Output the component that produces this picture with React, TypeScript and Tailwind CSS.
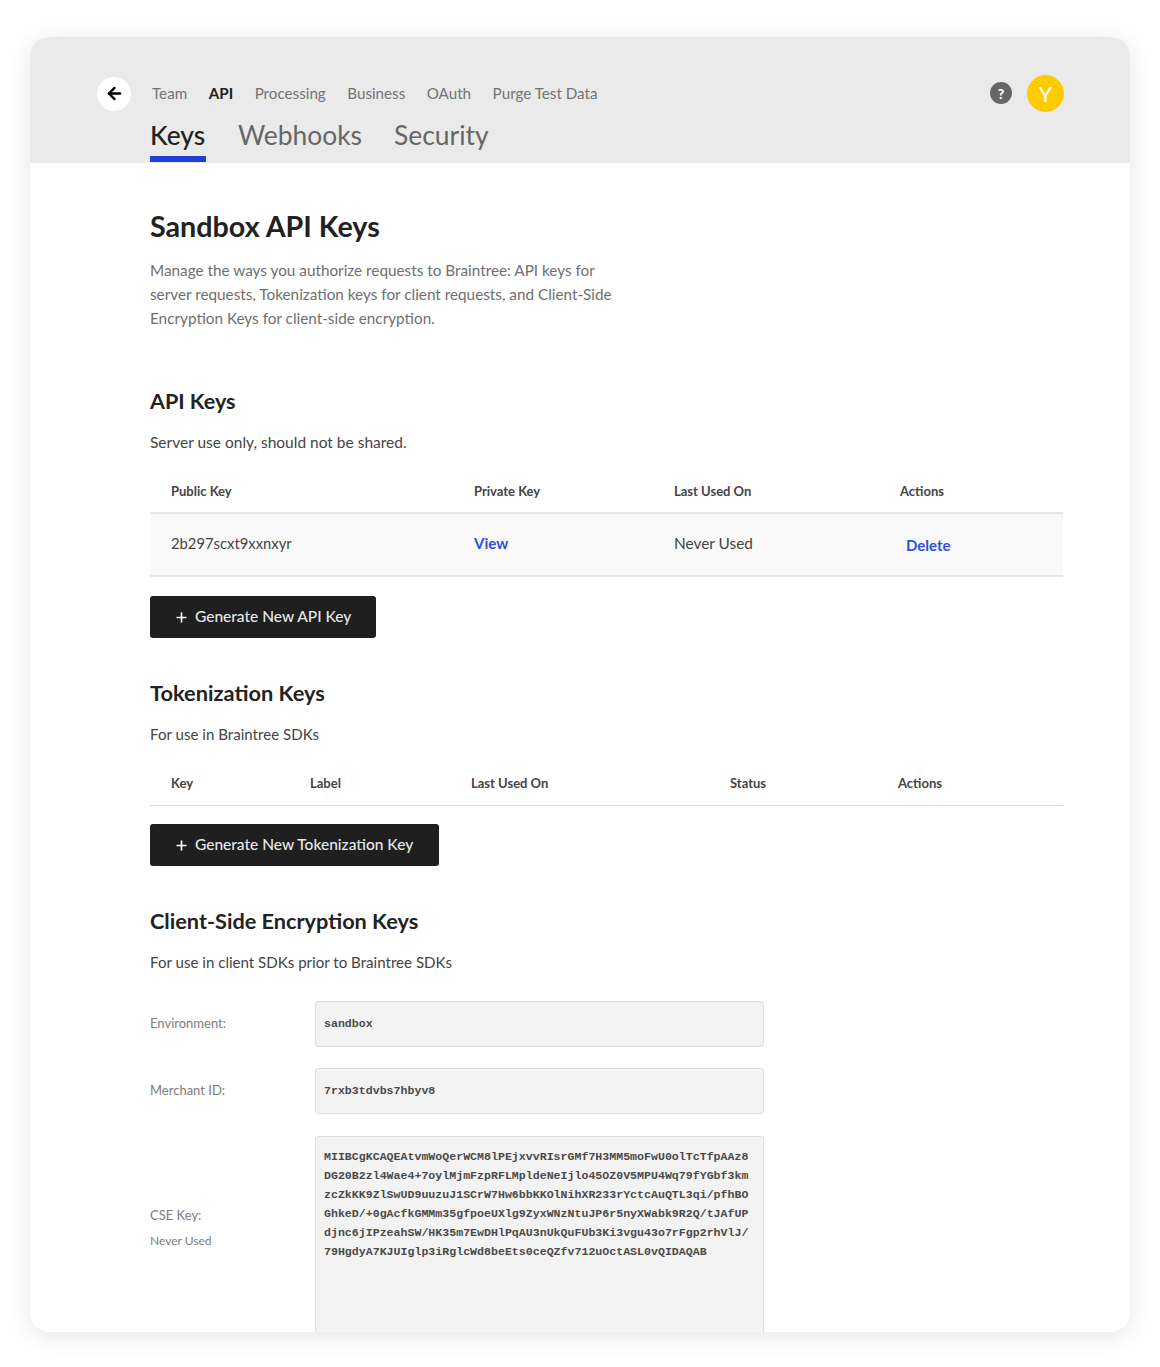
import { ArrowLeft, Plus } from 'lucide-react';

const navItems = ['Team', 'API', 'Processing', 'Business', 'OAuth', 'Purge Test Data'];

const cseLines = [
  'MIIBCgKCAQEAtvmWoQerWCM8lPEjxvvRIsrGMf7H3MM5moFwU0olTcTfpAAz8',
  'DG20B2zl4Wae4+7oylMjmFzpRFLMpldeNeIjlo45OZ0V5MPU4Wq79fYGbf3km',
  'zcZkKK9ZlSwUD9uuzuJ1SCrW7Hw6bbKKOlNihXR233rYctcAuQTL3qi/pfhBO',
  'GhkeD/+0gAcfkGMMm35gfpoeUXlg9ZyxWNzNtuJP6r5nyXWabk9R2Q/tJAfUP',
  'djnc6jIPzeahSW/HK35m7EwDHlPqAU3nUkQuFUb3Ki3vgu43o7rFgp2rhVlJ/',
  '79HgdyA7KJUIglp3iRglcWd8beEts0ceQZfv712uOctASL0vQIDAQAB',
];

function DarkButton({ label, width }: { label: string; width: string }) {
  return (
    <button className={`flex h-[42px] ${width} items-center gap-[6px] rounded-[3px] bg-[#1f1f1f] pl-[24px] text-[15.5px] font-medium text-[#e8e8e8]`}>
      <Plus size={15} strokeWidth={2.6} className="text-white" />
      {label}
    </button>
  );
}

export default function App() {
  return (
    <div className="min-h-[1367px] bg-white px-[30px] pt-[37px] font-['Lato',sans-serif]">
      <div className="h-[1295px] overflow-hidden rounded-[20px] bg-white shadow-[0_4px_24px_rgba(0,0,0,0.1)]">
        {/* top nav */}
        <div className="h-[126px] bg-[#eaeaea] pl-[67px] pr-[66px] pt-[38px]">
          <div className="flex items-center">
            <div className="flex h-[34px] w-[34px] items-center justify-center rounded-full bg-white">
              <ArrowLeft size={19} strokeWidth={3} className="text-black" />
            </div>
            <div className="ml-[21px] flex gap-[21.5px] text-[15.2px] text-[#737373]">
              {navItems.map((item) => (
                <span key={item} className={item === 'API' ? 'font-bold text-[#222]' : ''}>
                  {item}
                </span>
              ))}
            </div>
            <div className="ml-auto flex items-center gap-[15px]">
              <div className="-mt-[1px] flex h-[22px] w-[22px] items-center justify-center rounded-full bg-[#666] text-[14px] font-black text-white">
                ?
              </div>
              <div className="flex h-[37px] w-[37px] items-center justify-center rounded-full bg-[#ffcc00] text-[22px] font-medium text-white">
                Y
              </div>
            </div>
          </div>
          <div className="ml-[53px] mt-[7px] flex gap-[32px] text-[26.4px] leading-[32px] text-[#666]">
            <div className="h-[43px] w-[56px] border-b-[6px] border-[#1f3fd6] font-medium text-[#222]">Keys</div>
            <div>Webhooks</div>
            <div>Security</div>
          </div>
        </div>

        {/* page body */}
        <div className="pl-[120px] pr-[67px] pt-[45px] text-[#333]">
          <h1 className="text-[28.7px] font-bold leading-[36px] text-[#222]">Sandbox API Keys</h1>
          <p className="mt-[14px] w-[480px] text-[15.3px] leading-[24px] text-[#6f6f6f]">
            Manage the ways you authorize requests to Braintree: API keys for server requests, Tokenization keys for
            client requests, and Client-Side Encryption Keys for client-side encryption.
          </p>

          <h2 className="mt-[57px] text-[21.5px] font-bold leading-[28px] text-[#222]">API Keys</h2>
          <p className="mt-[16px] text-[15.5px] leading-[22px] text-[#444]">Server use only, should not be shared.</p>

          <div className="mt-[16px] flex h-[45px] items-center border-b-2 border-[#e6e6e6] pt-[2px] text-[13px] font-bold text-[#444]">
            <span className="ml-[21px] w-[303px]">Public Key</span>
            <span className="w-[200px]">Private Key</span>
            <span className="w-[226px]">Last Used On</span>
            <span>Actions</span>
          </div>
          <div className="flex h-[63px] items-center border-b-2 border-[#e6e6e6] bg-[#f9f9f9] pb-[2px] text-[15px] text-[#444]">
            <span className="ml-[21px] w-[303px] text-[14.8px]">2b297scxt9xxnxyr</span>
            <span className="w-[200px] font-bold text-[#2f4fd8]">View</span>
            <span className="w-[232px] text-[15.4px]">Never Used</span>
            <span className="mt-[4px] font-bold text-[#2f4fd8]">Delete</span>
          </div>
          <div className="mt-[19px]">
            <DarkButton label="Generate New API Key" width="w-[226px]" />
          </div>

          <h2 className="mt-[41px] text-[21.8px] font-bold leading-[28px] text-[#222]">Tokenization Keys</h2>
          <p className="mt-[16px] text-[15.1px] leading-[22px] text-[#444]">For use in Braintree SDKs</p>

          <div className="mt-[16px] flex h-[45px] items-center border-b border-[#dcdcdc] pt-[2px] text-[13px] font-bold text-[#444]">
            <span className="ml-[21px] w-[139px]">Key</span>
            <span className="w-[161px]">Label</span>
            <span className="w-[259px]">Last Used On</span>
            <span className="w-[168px]">Status</span>
            <span>Actions</span>
          </div>
          <div className="mt-[18px]">
            <DarkButton label="Generate New Tokenization Key" width="w-[289px]" />
          </div>

          <h2 className="mt-[41px] text-[21.7px] font-bold leading-[28px] text-[#222]">Client-Side Encryption Keys</h2>
          <p className="mt-[16px] text-[15.1px] leading-[22px] text-[#444]">For use in client SDKs prior to Braintree SDKs</p>

          <div className="mt-[28px] flex h-[46px] items-center">
            <span className="w-[165px] text-[13px] text-[#7d7d7d]">Environment:</span>
            <div className="flex h-full w-[449px] items-center rounded-[3px] border border-[#dedede] bg-[#f3f3f3] pl-[8px] font-['Liberation_Mono',monospace] text-[11.6px] font-bold text-[#4a4a4a]">
              sandbox
            </div>
          </div>
          <div className="mt-[21px] flex h-[46px] items-center">
            <span className="w-[165px] text-[13px] text-[#7d7d7d]">Merchant ID:</span>
            <div className="flex h-full w-[449px] items-center rounded-[3px] border border-[#dedede] bg-[#f3f3f3] pl-[8px] font-['Liberation_Mono',monospace] text-[11.6px] font-bold text-[#4a4a4a]">
              7rxb3tdvbs7hbyv8
            </div>
          </div>
          <div className="mt-[22px] flex items-start">
            <div className="mt-[69px] w-[165px]">
              <div className="text-[13px] leading-[20px] text-[#7d7d7d]">CSE Key:</div>
              <div className="mt-[6px] text-[12px] leading-[20px] text-[#7d7d7d]">Never Used</div>
            </div>
            <div className="h-[260px] w-[449px] rounded-[3px] border border-[#dedede] bg-[#f3f3f3] px-[8px] pt-[10px] font-['Liberation_Mono',monospace] text-[11.6px] font-bold leading-[19px] text-[#4a4a4a]">
              {cseLines.map((line) => (
                <div key={line} className="whitespace-nowrap">
                  {line}
                </div>
              ))}
            </div>
          </div>
        </div>
      </div>
    </div>
  );
}
